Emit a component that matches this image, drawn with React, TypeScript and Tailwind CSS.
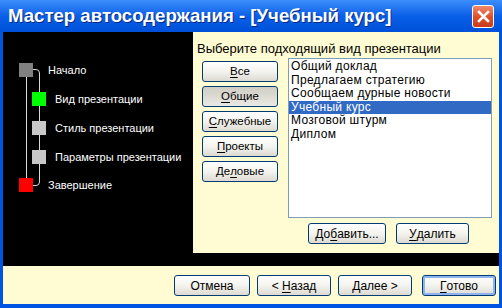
import React from "react";

const font = { fontFamily: '"Liberation Sans", Arial, sans-serif' };

const steps = [
  { label: "Начало", color: "bg-[#808080]", x: 19, y: 63, tx: 48 },
  { label: "Вид презентации", color: "bg-[#00ff00]", x: 32, y: 92, tx: 55 },
  { label: "Стиль презентации", color: "bg-[#c8c8c8]", x: 32, y: 121, tx: 55 },
  { label: "Параметры презентации", color: "bg-[#c8c8c8]", x: 32, y: 150, tx: 55 },
  { label: "Завершение", color: "bg-[#ff0000]", x: 19, y: 178, tx: 48 },
];

const kinds = [
  { pre: "", key: "В", post: "се" },
  { pre: "", key: "О", post: "бщие", pressed: true },
  { pre: "", key: "С", post: "лужебные" },
  { pre: "", key: "П", post: "роекты" },
  { pre: "Де", key: "л", post: "овые" },
];

const items = [
  "Общий доклад",
  "Предлагаем стратегию",
  "Сообщаем дурные новости",
  "Учебный курс",
  "Мозговой штурм",
  "Диплом",
];

type BtnProps = {
  children: React.ReactNode;
  className?: string;
  pressed?: boolean;
  isDefault?: boolean;
};

const XpButton = ({ children, className = "", pressed, isDefault }: BtnProps) => (
  <div
    className={`flex items-center justify-center h-[21px] rounded-[3px] border border-[#003c74] text-black whitespace-pre ${
      pressed
        ? "bg-linear-to-b from-[#cfcdc4] to-[#eae9e3]"
        : "bg-linear-to-b from-white via-[#f4f3ee] to-[#dcdad2]"
    } ${isDefault ? "shadow-[inset_0_0_0_2px_#8fb2f0]" : ""} ${className}`}
  >
    {children}
  </div>
);

const Mn = ({ c }: { c: string }) => <span className="underline underline-offset-2">{c}</span>;

export default function App() {
  return (
    <div
      className="w-[502px] h-[308px] flex flex-col bg-[#0054e3] overflow-hidden"
      style={font}
    >
      {/* Title bar */}
      <div className="h-[32px] shrink-0 flex items-center justify-between pl-[8px] pr-[8px] bg-linear-to-b from-[#3b8dfb] via-[#0a5fe8] to-[#0050d8]">
        <span className="text-white font-bold text-[18.6px] [text-shadow:1px_1px_0_#0a2a80]">
          Мастер автосодержания - [Учебный курс]
        </span>
        <div className="w-[22px] h-[23px] rounded-[3px] border border-white bg-linear-to-b from-[#f08a6a] via-[#e0502a] to-[#c83a18] flex items-center justify-center">
          <svg width="13" height="13" viewBox="0 0 13 13">
            <path d="M2 2 L11 11 M11 2 L2 11" stroke="white" strokeWidth="2.6" strokeLinecap="square" />
          </svg>
        </div>
      </div>

      {/* Body */}
      <div className="flex-1 flex flex-col mx-[3px] mb-[4px] bg-[#fffcd3]">
        <div className="h-[234px] flex bg-black">
          {/* Steps diagram */}
          <div className="relative w-[190px] shrink-0">
            <svg className="absolute left-0 top-0" width="190" height="234">
              <g transform="translate(-3,-32)" stroke="#d8d8d8" strokeWidth="1" fill="none">
                <path d="M33 69.5 H36 Q39.5 69.5 39.5 73 V182 Q39.5 185.5 36 185.5 H33" />
                <path d="M26.5 76 V178" />
              </g>
            </svg>
            {steps.map((s) => (
              <React.Fragment key={s.label}>
                <div
                  className={`absolute w-[14px] h-[14px] ${s.color}`}
                  style={{ left: s.x - 3, top: s.y - 32 }}
                />
                <div
                  className="absolute text-white text-[11px] leading-[14px] whitespace-nowrap"
                  style={{ left: s.tx - 3, top: s.y - 32 }}
                >
                  {s.label}
                </div>
              </React.Fragment>
            ))}
          </div>

          {/* Right panel */}
          <div className="flex-1 mb-[13px] bg-[#fffcd3] pl-[4px] pt-[9px]">
            <div className="text-[13px] leading-[15px] text-black">
              Выберите подходящий вид презентации
            </div>
            <div className="flex mt-[2px]">
              <div className="w-[76px] flex flex-col gap-[4px] mt-[3px] ml-[5px] text-[11.5px]">
                {kinds.map((k) => (
                  <XpButton key={k.key + k.post} pressed={k.pressed}>
                    {k.pre}
                    <Mn c={k.key} />
                    {k.post}
                  </XpButton>
                ))}
              </div>
              <div className="ml-[10px] flex flex-col">
                <div className="w-[204px] h-[160px] bg-white border border-[#7f9db9] pt-[1px] text-[12px] tracking-[0.3px] text-black">
                  {items.map((it, i) => (
                    <div
                      key={it}
                      className={`pl-[2px] leading-[13.6px] h-[13.6px] ${
                        i === 3 ? "bg-[#316ac5] text-white" : ""
                      }`}
                    >
                      {it}
                    </div>
                  ))}
                </div>
                <div className="flex gap-[10px] mt-[5px] ml-[20px] text-[12px]">
                  <XpButton className="w-[78px]">
                    До<Mn c="б" />авить...
                  </XpButton>
                  <XpButton className="w-[73px]">
                    <Mn c="У" />далить
                  </XpButton>
                </div>
              </div>
            </div>
          </div>
        </div>

        {/* Bottom buttons */}
        <div className="flex-1 flex items-center justify-end gap-[7px] pr-[3px] pt-[1px] text-[12px]">
          <XpButton className="w-[76px]">Отмена</XpButton>
          <XpButton className="w-[74px]">
            {"< "}
            <Mn c="Н" />
            азад
          </XpButton>
          <XpButton className="w-[74px] mr-[3px]">
            <Mn c="Д" />
            {"алее >"}
          </XpButton>
          <XpButton className="w-[74px]" isDefault>
            <Mn c="Г" />
            отово
          </XpButton>
        </div>
      </div>
    </div>
  );
}
